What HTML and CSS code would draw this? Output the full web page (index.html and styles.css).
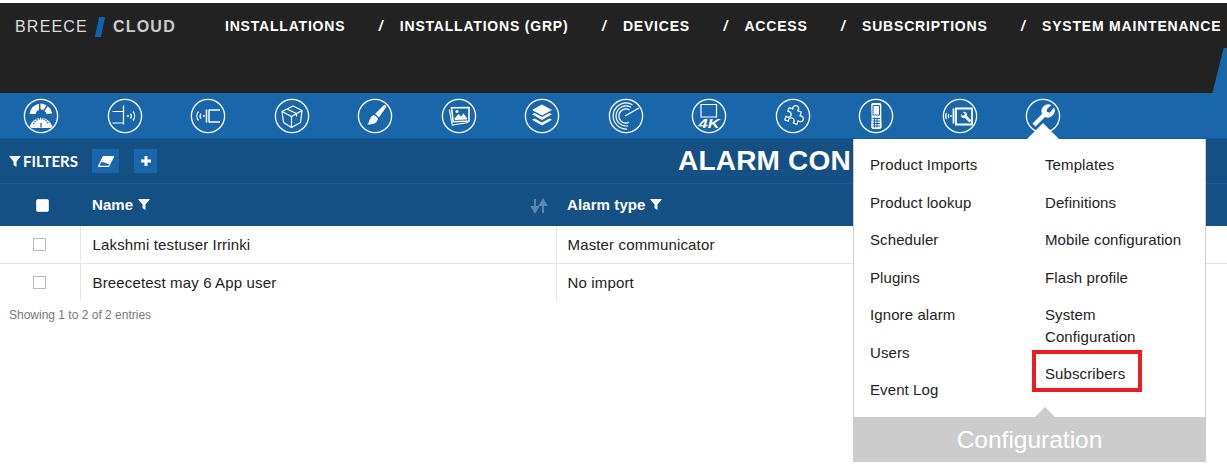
FILE: index.html

```html
<!DOCTYPE html>
<html lang="en">
<head>
  <meta charset="UTF-8" />
  <meta name="viewport" content="width=device-width, initial-scale=1.0" />
  <title>Breece Cloud - Alarm Configuration</title>
  <link rel="stylesheet" href="styles.css">
</head>
<body>

  <div class="topbar">
    <div class="logo">
      <span class="logo-breece">BREECE</span>
      <span class="logo-slash"></span>
      <span class="logo-cloud">CLOUD</span>
    </div>
    <div class="topnav">
      <a>INSTALLATIONS</a><i>/</i>
      <a>INSTALLATIONS (GRP)</a><i>/</i>
      <a>DEVICES</a><i>/</i>
      <a>ACCESS</a><i>/</i>
      <a>SUBSCRIPTIONS</a><i>/</i>
      <a>SYSTEM MAINTENANCE</a>
    </div>
    <div class="corner-shape"></div>
  </div>

  <div class="iconbar">
    <!-- dashboard -->
    <svg class="nav-icon" viewBox="0 0 36 36"><circle cx="18" cy="18" r="16.600"/>
      <g class="fill"><path d="M6.500 16a11.500 11.500 0 0 1 9.500-10.300v6a6 6 0 0 0-3.500 4.300z"/><path d="M17.500 5.500a11.500 11.500 0 0 1 6 1.800l-3 4.800a6 6 0 0 0-3-.8z"/><path d="M24.800 8.300a11.500 11.500 0 0 1 4.500 7l-5.500 1a6 6 0 0 0-2.200-3.300z"/>
      <path d="M6.500 29a11.800 11.800 0 0 1 23 0c-2 1-3 1.200-4.500 1h-14c-1.500.2-2.500 0-4.500-1z"/></g>
      <g class="cut"><path d="M10.500 26a8 8 0 0 1 15 0" stroke-dasharray="1.300 1.100" stroke-width="1.500"/><path d="M18 29.500v-4.500" stroke-width="1.300"/></g></svg>
    <!-- gateway -->
    <svg class="nav-icon" viewBox="0 0 36 36"><circle cx="18" cy="18" r="16.600"/>
      <g class="line"><path d="M5.500 13.500h11M16.500 7.500v19M5.500 25h11"/><path d="M23.500 15.500a4 4 0 0 1 0 5M26 13.500a7 7 0 0 1 0 9"/></g><circle class="fill" cx="21" cy="18" r="1"/></svg>
    <!-- node -->
    <svg class="nav-icon" viewBox="0 0 36 36"><circle cx="18" cy="18" r="16.600"/>
      <g class="line"><path d="M8.500 13.500a7 7 0 0 0 0 9M11 15.500a4 4 0 0 0 0 5"/><path d="M16.500 11.500v13M19 11.500v13M19 12h11M19 24h11" stroke-width="1.500"/></g><circle class="fill" cx="13.800" cy="18" r="1"/></svg>
    <!-- product box -->
    <svg class="nav-icon" viewBox="0 0 36 36"><circle cx="18" cy="18" r="16.600"/>
      <g class="line" stroke-linejoin="round"><path d="M8 13.500l11-5.500 9 4.500-1.500 12-9 5-8-5z"/><path d="M8 13.500l9.500 5 10.500-6M17.500 18.500v11.500M13 11l9.500 4.500v3"/></g></svg>
    <!-- paint brush -->
    <svg class="nav-icon" viewBox="0 0 36 36"><circle cx="18" cy="18" r="16.600"/>
      <g class="fill"><path d="M26.500 7.500c2-1.300 3.500.3 2.500 2l-7 9.800-4-3.300z"/><path d="M17 17l4 3.300c-.5 4.500-4.500 7-11 6 2.500-1.300 2-3.500 3-5.500 .8-2 2.300-3.500 4-3.800z"/></g></svg>
    <!-- images -->
    <svg class="nav-icon" viewBox="0 0 36 36"><circle cx="18" cy="18" r="16.600"/>
      <g class="line"><path d="M8.300 11.500l3 15.500 16-2.500"/><path d="M10.500 9.800l17.500-.300v13.500l-15.800.700z" stroke-width="1.600"/></g>
      <path class="fill" d="M13.500 20.500l4-4.500 2.500 2.500 2.500-3 3.500 4.500v1.500l-12 .500z"/><circle class="fill" cx="16" cy="13.500" r="1.500"/></svg>
    <!-- layers -->
    <svg class="nav-icon" viewBox="0 0 36 36"><circle cx="18" cy="18" r="16.600"/>
      <g class="fill"><path d="M18 6.500l10 5.500-10 5.500-10-5.500z"/><path d="M8 16.200l2.500-1.300 7.500 4.100 7.500-4.100 2.500 1.300-10 5.800z"/><path d="M8 21.700l2.500-1.300 7.500 4.100 7.500-4.100 2.500 1.300-10 5.800z"/></g></svg>
    <!-- radar -->
    <svg class="nav-icon" viewBox="0 0 36 36"><circle cx="18" cy="18" r="16.600"/>
      <g class="line" stroke-width="1"><path d="M24.500 6.700a13 13 0 1 0-5.500 24.300"/><path d="M23 9.300a10 10 0 1 0-3 18.500"/><path d="M21.500 12a7 7 0 1 0-.5 12.300"/><path d="M17 18l14-8"/></g></svg>
    <!-- 4K -->
    <svg class="nav-icon" viewBox="0 0 36 36"><circle cx="18" cy="18" r="16.600"/>
      <path class="line" d="M10 6.500h15.500v12.500h-15.500z" stroke-width="1.500"/>
      <text class="icon-text" x="7.500" y="30" textLength="21" lengthAdjust="spacingAndGlyphs">4K</text></svg>
    <!-- plugin -->
    <svg class="nav-icon" viewBox="0 0 36 36"><circle cx="18" cy="18" r="16.600"/>
      <path class="line" stroke-linejoin="round" transform="rotate(20 18 18)" d="M11.500 11.500h4a2.900 2.900 0 1 1 5 0h4v4a2.900 2.900 0 1 1 0 5v4h-4a2.900 2.900 0 1 0-5 0h-4v-4a2.900 2.900 0 1 0 0-5z"/></svg>
    <!-- handheld -->
    <svg class="nav-icon" viewBox="0 0 36 36"><circle cx="18" cy="18" r="16.600"/>
      <path class="fill" d="M14 5h8.500l.8 1.500v13.500l.4 9.500-1.500 1.500h-7.500l-1.500-1.500.4-9.500-.4-13.500z"/>
      <path class="cut" d="M15 7.500h6.500v9.500h-6.500z" stroke-width="1"/>
      <path class="cut" d="M14.500 20.500h7.500M14.500 23h7.500M14.500 25.500h7.500M14.500 28h7.500M16.500 19.500v10M19 19.500v10" stroke-width=".6"/></svg>
    <!-- device service -->
    <svg class="nav-icon" viewBox="0 0 36 36"><circle cx="18" cy="18" r="16.600"/>
      <g class="line"><path d="M4.500 15a6 6 0 0 0 0 6M6.800 16a4 4 0 0 0 0 4"/><path d="M11.500 10.500v15M14 10.500h16v16h-16z" stroke-width="1.800"/></g>
      <circle class="fill" cx="9" cy="18" r=".9"/>
      <path class="fill" d="M21 14a3.200 3.200 0 0 1 4 4l4.500 4.500-2 2-4.500-4.500a3.200 3.200 0 0 1-4-4l2 2 2-1.500z"/></svg>
    <!-- wrench -->
    <svg class="nav-icon" viewBox="0 0 36 36"><circle cx="18" cy="18" r="16.600"/>
      <path class="fill" d="M29 9.500a7 7 0 0 1-9 9.500l-9.500 9.500-3-3 9.500-9.500a7 7 0 0 1 9.500-9l-4.500 4v3l3 .5z"/></svg>
  </div>

  <div class="toolbar">
    <div class="filters">
      <svg class="funnel" viewBox="0 0 12 12"><path d="M0 1h12L7.500 6.500V12l-3-2V6.500z"/></svg>FILTERS
    </div>
    <button class="tool-btn tool-erase">
      <svg viewBox="0 0 18 12" width="16" height="11"><path d="M6 .5h11.500L12 11.500H.5z" fill="none" stroke="#fff" stroke-width="1.200"/><path d="M6 .5h11.500L13 9 3 6z" fill="#fff"/></svg>
    </button>
    <button class="tool-btn tool-add">
      <svg viewBox="0 0 12 12" width="12" height="12"><path d="M6 1v10M1 6h10" stroke="#fff" stroke-width="3"/></svg>
    </button>
    <h1 class="page-title">ALARM CON</h1>
  </div>

  <table class="grid">
    <thead>
      <tr>
        <th class="col-check"><span class="check check-head"></span></th>
        <th class="col-name">
          <div class="th-inner">
            <span>Name <svg class="funnel" viewBox="0 0 12 12"><path d="M0 1h12L7.500 6.500V12l-3-2V6.500z"/></svg></span>
            <svg class="sort" viewBox="0 0 18 16" width="18" height="16"><path d="M5 1v9M2 9l3 5 3-5zM13 15V6M10 7l3-5 3 5z" fill="#5b86ad" stroke="#5b86ad" stroke-width="2"/></svg>
          </div>
        </th>
        <th>Alarm type <svg class="funnel" viewBox="0 0 12 12"><path d="M0 1h12L7.500 6.500V12l-3-2V6.500z"/></svg></th>
      </tr>
    </thead>
    <tbody>
      <tr>
        <td class="col-check"><span class="check"></span></td>
        <td>Lakshmi testuser Irrinki</td>
        <td>Master communicator</td>
      </tr>
      <tr>
        <td class="col-check"><span class="check"></span></td>
        <td>Breecetest may 6 App user</td>
        <td>No import</td>
      </tr>
    </tbody>
  </table>
  <div class="table-info">Showing 1 to 2 of 2 entries</div>

  <div class="config-menu">
    <div class="menu-cols">
      <div class="menu-col">
        <a>Product Imports</a>
        <a>Product lookup</a>
        <a>Scheduler</a>
        <a>Plugins</a>
        <a>Ignore alarm</a>
        <a>Users</a>
        <a>Event Log</a>
      </div>
      <div class="menu-col">
        <a>Templates</a>
        <a>Definitions</a>
        <a>Mobile configuration</a>
        <a>Flash profile</a>
        <a>System Configuration</a>
        <a class="marked">Subscribers</a>
      </div>
    </div>
    <div class="menu-footer">Configuration</div>
  </div>

</body>
</html>
```

FILE: styles.css

```css
body {
  margin: 0;
  padding-top: 3px;
  font-family: "Liberation Sans", Arial, sans-serif;
  background: #fff;
  color: #222;
  height: 472px;
  overflow: hidden;
  position: relative;
}

.topbar {
  height: 90px;
  background: #222;
  display: flex;
  align-items: flex-start;
  position: relative;
  overflow: hidden;
}

.logo {
  display: flex;
  align-items: center;
  width: 225px;
  padding: 14px 0 0 15px;
  box-sizing: border-box;
  font-size: 16px;
  letter-spacing: 1.2px;
  color: #ddd;
}

.logo-slash {
  width: 6px;
  height: 20px;
  margin: 0 10px 0 9px;
  background: #0b64b0;
  transform: skewX(-12deg);
}

.logo-cloud {
  font-weight: bold;
  color: #ccc;
}

.topnav {
  display: flex;
  padding-top: 15px;
  font-size: 14px;
  line-height: 17px;
  font-weight: bold;
  letter-spacing: .8px;
  color: #fff;
  white-space: nowrap;
}

.topnav i {
  margin: 0 16.250px 0 33.500px;
}

.corner-shape {
  position: absolute;
  right: -27px;
  top: 45px;
  width: 36px;
  height: 45px;
  background: #1a66aa;
  transform: skewX(-14deg);
}

.iconbar {
  height: 45px;
  background: #1a66aa;
  display: flex;
  align-items: center;
  gap: 47.5px;
  padding-left: 23px;
}

.nav-icon {
  width: 36px;
  height: 36px;
  flex: none;
}

.nav-icon circle {
  fill: none;
  stroke: #fff;
  stroke-width: 1.3;
}

.nav-icon .fill,
.nav-icon circle.fill {
  fill: #fff;
  stroke: none;
}

.nav-icon .line {
  fill: none;
  stroke: #fff;
  stroke-width: 1.2;
}

.nav-icon .cut {
  fill: none;
  stroke: #1a66aa;
  stroke-width: 1;
}

.icon-text {
  font-size: 12px;
  font-weight: bold;
  font-style: italic;
  fill: #fff;
}

.toolbar {
  height: 46px;
  background: #155085;
  border-top: 1px solid #105a98;
  border-bottom: 1px solid #1a5c96;
  box-sizing: border-box;
  display: flex;
  align-items: center;
  padding-left: 9px;
  color: #fff;
}

.filters {
  font-family: Lato, sans-serif;
  font-size: 15px;
  font-weight: bold;
  width: 83px;
  display: flex;
  align-items: center;
  gap: 2px;
  margin-bottom: 1px;
}

.funnel {
  width: 12px;
  height: 12px;
  fill: #fff;
}

.tool-btn {
  height: 24px;
  border: 0;
  padding: 0;
  background: #1a66aa;
  display: flex;
  align-items: center;
  justify-content: center;
}

.tool-erase {
  width: 27px;
  margin-right: 15px;
}

.tool-add {
  width: 23px;
}

.page-title {
  margin: 0 0 0 521px;
  font-size: 28px;
  line-height: 32px;
  font-weight: bold;
  letter-spacing: .2px;
  white-space: nowrap;
}

.grid {
  width: 100%;
  border-collapse: collapse;
  table-layout: fixed;
}

.grid th {
  height: 40px;
  padding: 0 12px 2px;
  background: #155085;
  color: #fff;
  font-size: 15px;
  letter-spacing: .1px;
  text-align: left;
}

.grid td {
  height: 37px;
  padding: 0 12px;
  font-size: 15px;
  letter-spacing: .15px;
  border-bottom: 1px solid #e6e6e6;
  border-right: 1px solid #e6e6e6;
}

.grid tr:last-child td {
  border-bottom: 0;
}

.grid td:last-child,
.grid th:last-child {
  padding-left: 11px;
}

.grid td:last-child {
  border-right: 0;
}

.grid .col-check {
  width: 56px;
  text-align: center;
}

.col-name {
  width: 452px;
}

.th-inner {
  display: flex;
  justify-content: space-between;
  align-items: center;
}

.sort {
  margin-right: -4px;
  margin-top: 3px;
}

.check {
  display: inline-block;
  width: 11px;
  height: 11px;
  border: 1px solid #bbb;
  vertical-align: middle;
  background: #fff;
  margin-bottom: 2px;
}

.check-head {
  border-radius: 2px;
  border-color: #ddd;
  margin: 0 0 0 5px;
}

.table-info {
  padding: 7px 9px;
  font-size: 12px;
  line-height: 14px;
  color: #777;
}

.config-menu {
  position: absolute;
  left: 853px;
  top: 139px;
  width: 353px;
  background: #fff;
}

.config-menu::before {
  content: "";
  position: absolute;
  left: 174px;
  top: -16px;
  border: 16px solid transparent;
  border-top: 0;
  border-bottom-color: #fff;
}

.menu-cols {
  display: flex;
  height: 278px;
  box-sizing: border-box;
  padding-top: 7px;
  border-left: 1px solid #ccc;
  border-right: 1px solid #ccc;
}

.menu-col {
  width: 175px;
  padding-left: 16px;
  box-sizing: border-box;
}

.menu-col a {
  display: block;
  position: relative;
  width: 141px;
  padding: 8px 0 7.500px;
  font-size: 15px;
  letter-spacing: .1px;
  line-height: 22px;
  color: #222;
}

.menu-col .marked {
  margin-top: -1px;
}

.marked::after {
  content: "";
  position: absolute;
  left: -13px;
  top: -5px;
  width: 102px;
  height: 34px;
  border: 4px solid #ec1c24;
}

.menu-footer {
  position: relative;
  height: 45px;
  background: #ccc;
  color: #fff;
  font-size: 24.500px;
  line-height: 46px;
  text-align: center;
}

.menu-footer::before {
  content: "";
  position: absolute;
  left: 182px;
  top: -10px;
  border: 10px solid transparent;
  border-top: 0;
  border-bottom-color: #ccc;
}
```
